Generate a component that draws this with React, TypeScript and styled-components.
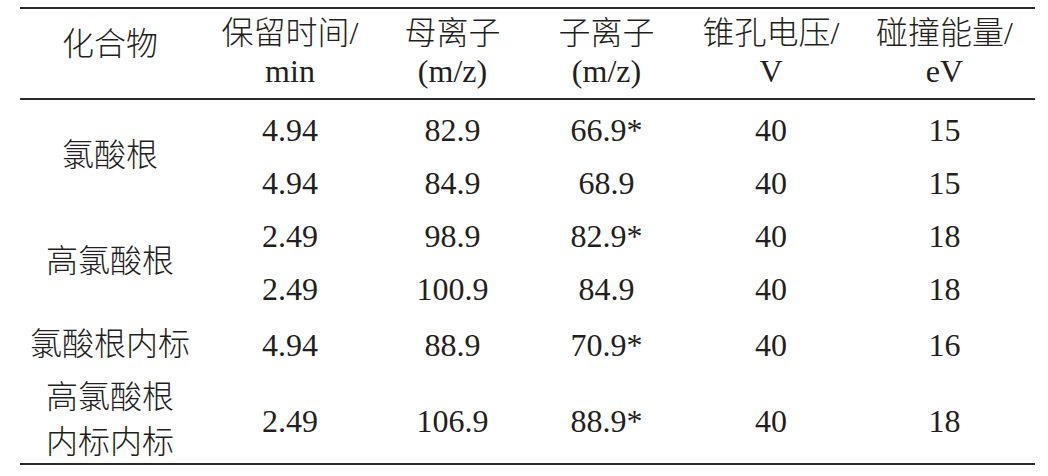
import * as React from "react"
import styled, { createGlobalStyle } from "styled-components"

const Ink = "#231f20"
const Rule = "#2a2a2a"

const GlobalStyle = createGlobalStyle`
  html, body {
    margin: 0;
    padding: 0;
    background: #ffffff;
  }
  body {
    font-family: "Liberation Serif", "Times New Roman", serif;
    color: ${Ink};
  }
`

const Page = styled.div`
  padding: 7px 0 0 20px;
  width: 1048px;
  height: 476px;
  box-sizing: border-box;
`

const Table = styled.table`
  width: 1015px;
  border-collapse: separate;
  border-spacing: 0;
  table-layout: fixed;
  font-size: 32px;
  font-family: "Liberation Serif", "Times New Roman", serif;
`

// Chinese text: only a sans CJK face is installed, so use its light cut
const Han = styled.span`
  font-family: "Noto Sans CJK SC", sans-serif;
  font-weight: 300;
`

const Th = styled.th<{ offset?: number }>`
  font-weight: 400;
  text-align: center;
  vertical-align: top;
  line-height: 38px;
  height: 93px;
  box-sizing: border-box;
  padding: ${({ offset }) => offset ?? 2}px 0 0;
  border-top: 2px solid ${Rule};
  border-bottom: 2px solid ${Rule};
  white-space: nowrap;
`

const Row = styled.tr<{ h: number }>`
  height: ${({ h }) => h}px;
`

const Td = styled.td<{ last?: boolean }>`
  text-align: center;
  vertical-align: middle;
  padding: 6px 0 0;
  line-height: 40px;
  white-space: nowrap;
  border-bottom: ${({ last }) => (last ? `2px solid ${Rule}` : "none")};
`

const NameCell = styled(Td)`
  padding: 0;
  line-height: 42px;
`

const widths = [180, 180, 145, 163, 166, 181]

type Item = {
  name?: React.ReactNode
  span?: number
  time: string
  parent: string
  child: string
  volt: string
  energy: string
  h: number
}

const rows: Item[] = [
  { name: <Han>氯酸根</Han>, span: 2, time: "4.94", parent: "82.9", child: "66.9*", volt: "40", energy: "15", h: 53 },
  { time: "4.94", parent: "84.9", child: "68.9", volt: "40", energy: "15", h: 53 },
  { name: <Han>高氯酸根</Han>, span: 2, time: "2.49", parent: "98.9", child: "82.9*", volt: "40", energy: "18", h: 53 },
  { time: "2.49", parent: "100.9", child: "84.9", volt: "40", energy: "18", h: 53 },
  { name: <Han>氯酸根内标</Han>, span: 1, time: "4.94", parent: "88.9", child: "70.9*", volt: "40", energy: "16", h: 60 },
  {
    name: (
      <Han>
        高氯酸根
        <br />
        内标内标
      </Han>
    ),
    span: 1,
    time: "2.49",
    parent: "106.9",
    child: "88.9*",
    volt: "40",
    energy: "18",
    h: 93,
  },
]

const App: React.FC = () => {
  return (
    <Page>
      <GlobalStyle />
      <Table>
        <colgroup>
          {widths.map((w, i) => (
            <col key={i} style={{ width: w }} />
          ))}
        </colgroup>
        <thead>
          <tr>
            <Th offset={13}>
              <Han>化合物</Han>
            </Th>
            <Th>
              <Han>保留时间</Han>/
              <br />
              min
            </Th>
            <Th>
              <Han>母离子</Han>
              <br />
              (m/z)
            </Th>
            <Th>
              <Han>子离子</Han>
              <br />
              (m/z)
            </Th>
            <Th>
              <Han>锥孔电压</Han>/
              <br />V
            </Th>
            <Th>
              <Han>碰撞能量</Han>/
              <br />
              eV
            </Th>
          </tr>
        </thead>
        <tbody>
          {rows.map((r, i) => {
            const last = i === rows.length - 1
            return (
              <Row key={i} h={r.h}>
                {r.name !== undefined && (
                  <NameCell rowSpan={r.span} last={last}>
                    {r.name}
                  </NameCell>
                )}
                <Td last={last}>{r.time}</Td>
                <Td last={last}>{r.parent}</Td>
                <Td last={last}>{r.child}</Td>
                <Td last={last}>{r.volt}</Td>
                <Td last={last}>{r.energy}</Td>
              </Row>
            )
          })}
        </tbody>
      </Table>
    </Page>
  )
}

export default App
